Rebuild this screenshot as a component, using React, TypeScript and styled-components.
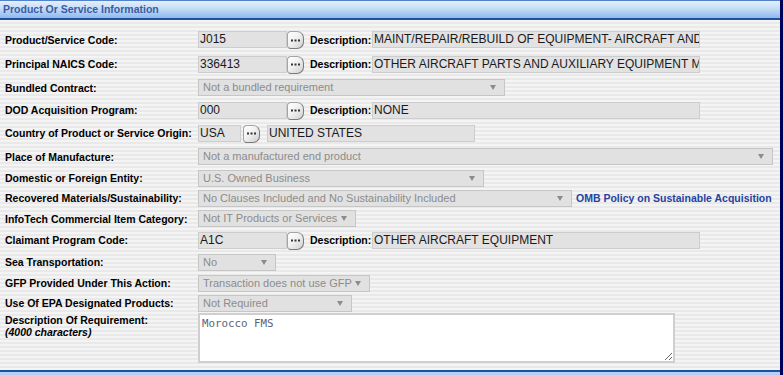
import React from 'react';
import styled, { createGlobalStyle } from 'styled-components';

const GlobalStyle = createGlobalStyle`
    html, body { margin: 0; padding: 0; background: #ffffff; }
    body { font-family: "Liberation Sans", Arial, sans-serif; }
`;

const Frame = styled.div`
    width: 783px;
    box-sizing: border-box;
    border-right: 3px solid #00005a;
`;

const SectionHeader = styled.div`
    height: 17px;
    box-sizing: content-box;
    border-top: 1px solid #5282cc;
    border-bottom: 2px solid #1f4f9f;
    background: linear-gradient(to bottom, #e4effc 0%, #c4dcf6 45%, #8fb9ee 100%);
    color: #3a5ca6;
    font-size: 10.5px;
    font-weight: bold;
    line-height: 17px;
    padding-left: 3px;
    white-space: nowrap;
`;

const Body = styled.div`
    padding: 7px 0 5px;
    background: repeating-linear-gradient(to bottom, #f4f4f4 0px, #f4f4f4 2px, #e9e9e9 2px, #e9e9e9 4px);
`;

const Row = styled.div<{ $h: number; $top?: boolean }>`
    display: flex;
    align-items: ${({ $top }) => ($top ? 'flex-start' : 'center')};
    height: ${({ $h }) => $h}px;
`;

const Label = styled.div`
    width: 193px;
    padding-left: 5px;
    flex: none;
    font-size: 10.5px;
    font-weight: bold;
    color: #000;
    white-space: nowrap;
    line-height: 12px;

    em { display: block; font-style: italic; }
`;

const TextBox = styled.div<{ $w: number }>`
    width: ${({ $w }) => $w}px;
    height: 17px;
    box-sizing: border-box;
    flex: none;
    background: #e2e2e2;
    border: 1px solid #cdcdcd;
    color: #1a1a1a;
    font-size: 12px;
    line-height: 15px;
    padding-left: 1px;
    white-space: nowrap;
    overflow: hidden;
`;

const LookupButton = styled.button`
    width: 17px;
    height: 18px;
    flex: none;
    margin: 1px 0 0 0;
    padding: 0;
    display: flex;
    align-items: center;
    justify-content: center;
    border: 1px solid #a4a4a4;
    border-right-color: #7a7a7a;
    border-bottom-color: #7a7a7a;
    border-radius: 4px 7px 7px 4px;
    background: linear-gradient(135deg, #ffffff 0%, #f1f1f1 45%, #cfcfcf 100%);
`;

const DescLabel = styled.span`
    margin-left: 6px;
    width: 62px;
    flex: none;
    font-size: 10.5px;
    font-weight: bold;
    color: #000;
`;

const Select = styled.div<{ $w: number }>`
    position: relative;
    width: ${({ $w }) => $w}px;
    height: 17px;
    box-sizing: border-box;
    flex: none;
    background: #e1e1e1;
    border: 1px solid #c6c6c6;
    color: #8c8c8c;
    font-size: 11px;
    line-height: 15px;
    padding-left: 4px;
    white-space: nowrap;

    &::after {
        content: '';
        position: absolute;
        right: 8px;
        top: 5px;
        border-left: 3px solid transparent;
        border-right: 3px solid transparent;
        border-top: 5px solid #8c8c8c;
    }
`;

const PolicyLink = styled.a`
    margin-left: 4px;
    font-size: 10.5px;
    font-weight: bold;
    color: #23439f;
    text-decoration: none;
    white-space: nowrap;
`;

const Requirement = styled.textarea`
    width: 477px;
    height: 50px;
    box-sizing: border-box;
    flex: none;
    margin: 0;
    border: 2px solid #cfcfcf;
    background: #ffffff;
    color: #5a6478;
    font-family: "DejaVu Sans Mono", monospace;
    font-size: 10.8px;
    padding: 2px 2px;
    outline: none;
`;

const Gap = styled.span<{ $w: number }>`
    width: ${({ $w }) => $w}px;
    flex: none;
`;

const NextHeader = styled.div`
    height: 20px;
    border-top: 2px solid #1f4f9f;
    background: linear-gradient(to bottom, #b6d2f4, #9cc0ee);
`;

const Dots = () => (
    <svg width="9" height="3" viewBox="0 0 9 3">
        <rect x="0" y="0.5" width="2" height="2" fill="#333" />
        <rect x="3.5" y="0.5" width="2" height="2" fill="#333" />
        <rect x="7" y="0.5" width="2" height="2" fill="#333" />
    </svg>
);

const Lookup = () => (
    <LookupButton type="button" aria-label="Lookup">
        <Dots />
    </LookupButton>
);

export default function App() {
    return (
        <>
            <GlobalStyle />
            <Frame>
                <SectionHeader>Product Or Service Information</SectionHeader>
                <Body>
                    <Row $h={25}>
                        <Label>Product/Service Code:</Label>
                        <TextBox $w={89}>J015</TextBox>
                        <Lookup />
                        <DescLabel>Description:</DescLabel>
                        <TextBox $w={328}>MAINT/REPAIR/REBUILD OF EQUIPMENT- AIRCRAFT AND</TextBox>
                    </Row>
                    <Row $h={24}>
                        <Label>Principal NAICS Code:</Label>
                        <TextBox $w={89}>336413</TextBox>
                        <Lookup />
                        <DescLabel>Description:</DescLabel>
                        <TextBox $w={328}>OTHER AIRCRAFT PARTS AND AUXILIARY EQUIPMENT M</TextBox>
                    </Row>
                    <Row $h={23}>
                        <Label>Bundled Contract:</Label>
                        <Select $w={307}>Not a bundled requirement</Select>
                    </Row>
                    <Row $h={22}>
                        <Label>DOD Acquisition Program:</Label>
                        <TextBox $w={89}>000</TextBox>
                        <Lookup />
                        <DescLabel>Description:</DescLabel>
                        <TextBox $w={328}>NONE</TextBox>
                    </Row>
                    <Row $h={24}>
                        <Label>Country of Product or Service Origin:</Label>
                        <TextBox $w={43}>USA</TextBox>
                        <Gap $w={2} />
                        <Lookup />
                        <Gap $w={7} />
                        <TextBox $w={208}>UNITED STATES</TextBox>
                    </Row>
                    <Row $h={23}>
                        <Label>Place of Manufacture:</Label>
                        <Select $w={575}>Not a manufactured end product</Select>
                    </Row>
                    <Row $h={20}>
                        <Label>Domestic or Foreign Entity:</Label>
                        <Select $w={286}>U.S. Owned Business</Select>
                    </Row>
                    <Row $h={20}>
                        <Label>Recovered Materials/Sustainability:</Label>
                        <Select $w={374}>No Clauses Included and No Sustainability Included</Select>
                        <PolicyLink href="#">OMB Policy on Sustainable Acquisition</PolicyLink>
                    </Row>
                    <Row $h={21}>
                        <Label>InfoTech Commercial Item Category:</Label>
                        <Select $w={158}>Not IT Products or Services</Select>
                    </Row>
                    <Row $h={22}>
                        <Label>Claimant Program Code:</Label>
                        <TextBox $w={89}>A1C</TextBox>
                        <Lookup />
                        <DescLabel>Description:</DescLabel>
                        <TextBox $w={328}>OTHER AIRCRAFT EQUIPMENT</TextBox>
                    </Row>
                    <Row $h={22}>
                        <Label>Sea Transportation:</Label>
                        <Select $w={78}>No</Select>
                    </Row>
                    <Row $h={20}>
                        <Label>GFP Provided Under This Action:</Label>
                        <Select $w={172}>Transaction does not use GFP</Select>
                    </Row>
                    <Row $h={20}>
                        <Label>Use Of EPA Designated Products:</Label>
                        <Select $w={154}>Not Required</Select>
                    </Row>
                    <Row $h={52} $top>
                        <Label style={{ paddingTop: 1 }}>
                            Description Of Requirement:
                            <em>(4000 characters)</em>
                        </Label>
                        <Requirement readOnly value="Morocco FMS" />
                    </Row>
                </Body>
                <NextHeader />
            </Frame>
        </>
    );
}
